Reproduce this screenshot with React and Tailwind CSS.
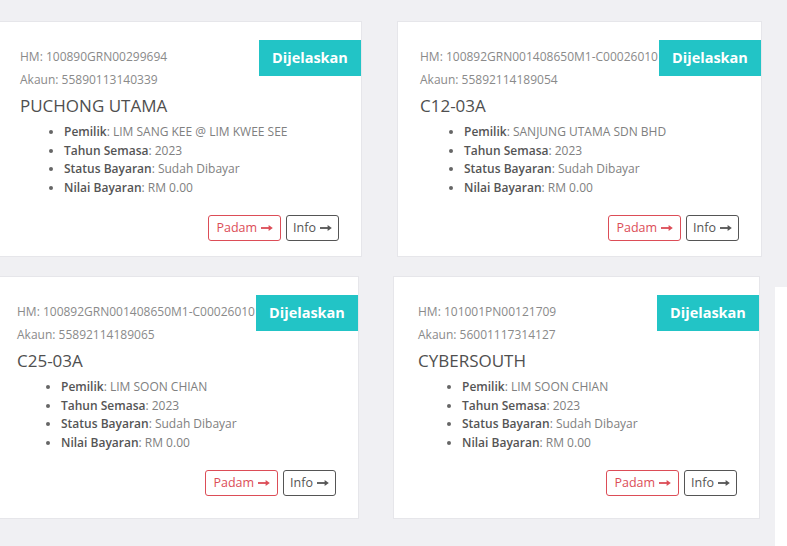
import React from 'react';

const Arrow = () => (
  <svg width="12" height="8" viewBox="0 0 12 8" className="inline-block ml-[4px]">
    <rect x="0" y="3.1" width="8.5" height="1.8" fill="currentColor" />
    <polygon points="7.6,0.9 11.8,4 7.6,7.1" fill="currentColor" />
  </svg>
);

const cards = [
  [
    { hm: '100890GRN00299694', akaun: '55890113140339', name: 'PUCHONG UTAMA', pemilik: 'LIM SANG KEE @ LIM KWEE SEE' },
    { hm: '100892GRN001408650M1-C0002601018', akaun: '55892114189054', name: 'C12-03A', pemilik: 'SANJUNG UTAMA SDN BHD' },
  ],
  [
    { hm: '100892GRN001408650M1-C0002601019', akaun: '55892114189065', name: 'C25-03A', pemilik: 'LIM SOON CHIAN' },
    { hm: '101001PN00121709', akaun: '56001117314127', name: 'CYBERSOUTH', pemilik: 'LIM SOON CHIAN' },
  ],
];

const Card = ({ c, wide }) => (
  <div
    className={`relative shrink-0 bg-white border border-[#e6e6ea] overflow-hidden pr-[22px] pt-[23px] ${
      wide ? 'w-[367px] h-[243px] pl-[24px]' : 'w-[365px] h-[236px] pl-[22px]'
    }`}
  >
    <div className="absolute right-0 top-[18px] w-[102px] h-[36px] bg-[#22c4c6] text-white font-bold text-[14.5px] flex items-center justify-center">
      Dijelaskan
    </div>
    <div className="text-[12px] leading-[23px] text-[#8a8a8a] whitespace-nowrap">HM: {c.hm}</div>
    <div className="text-[12px] leading-[23px] text-[#8a8a8a]">Akaun: {c.akaun}</div>
    <div className="mt-[3px] text-[17px] leading-[24px] text-[#4f4f4f] font-medium">{c.name}</div>
    <ul className="mt-[5px] list-disc pl-[44px] text-[12px] leading-[18.5px] text-[#808080] marker:text-[#666]">
      <li><span className="font-semibold text-[#555]">Pemilik</span>: {c.pemilik}</li>
      <li><span className="font-semibold text-[#555]">Tahun Semasa</span>: 2023</li>
      <li><span className="font-semibold text-[#555]">Status Bayaran</span>: Sudah Dibayar</li>
      <li><span className="font-semibold text-[#555]">Nilai Bayaran</span>: RM 0.00</li>
    </ul>
    <div className="mt-[18px] flex justify-end gap-[5px]">
      <button className="h-[26px] px-[7px] border border-[#dc4d57] rounded-[3px] text-[#dc4d57] text-[12.5px] flex items-center">
        Padam<Arrow />
      </button>
      <button className="h-[26px] px-[6px] border border-[#555] rounded-[3px] text-[#555] text-[12.5px] flex items-center">
        Info<Arrow />
      </button>
    </div>
  </div>
);

export default function App() {
  return (
    <div
      className="w-[787px] h-[546px] overflow-hidden bg-[#f0f0f3] pt-[21px]"
      style={{ fontFamily: '"Open Sans", sans-serif' }}
    >
      <div className="flex gap-[35px] ml-[-3px]">
        {cards[0].map((c, i) => (
          <Card key={i} c={c} />
        ))}
      </div>
      <div className="flex gap-[34px] ml-[-8px] mt-[19px]">
        {cards[1].map((c, i) => (
          <Card key={i} c={c} wide />
        ))}
        <div className="mt-[11px] ml-[-19px] w-[40px] h-[300px] bg-white shrink-0" />
      </div>
    </div>
  );
}
